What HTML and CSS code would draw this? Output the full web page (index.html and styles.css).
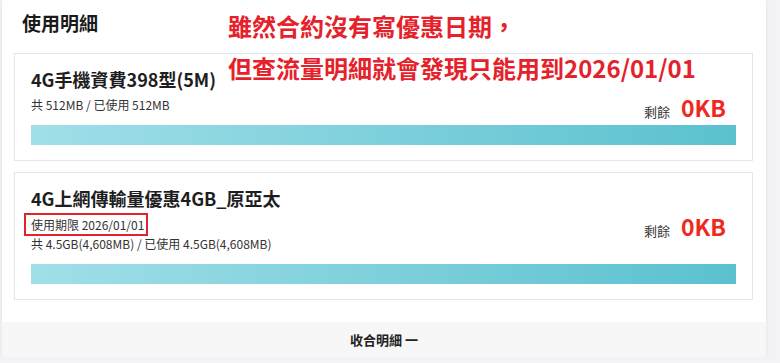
FILE: index.html
```html
<!DOCTYPE html>
<html>
<head>
    <meta charset="utf-8">
    <title>使用明細</title>
    <link rel="stylesheet" href="styles.css">
</head>
<body>
    <div class="panel">
        <h2 class="panel-title">使用明細</h2>
        <div class="usage-list">
            <div class="usage-card">
                <div class="usage-head">
                    <div class="usage-info">
                        <h3>4G手機資費398型(5M)</h3>
                        <p class="usage-total">共 512MB / 已使用 512MB</p>
                    </div>
                    <div class="usage-left">
                        <span class="left-label">剩餘</span>
                        <span class="left-value">0KB</span>
                    </div>
                </div>
                <div class="usage-bar"></div>
            </div>
            <div class="usage-card">
                <div class="usage-head">
                    <div class="usage-info">
                        <h3>4G上網傳輸量優惠4GB_原亞太</h3>
                        <p class="usage-expire"><span class="marked">使用期限 2026/01/01</span></p>
                        <p class="usage-total tight">共 4.5GB(4,608MB) / 已使用 4.5GB(4,608MB)</p>
                    </div>
                    <div class="usage-left">
                        <span class="left-label">剩餘</span>
                        <span class="left-value">0KB</span>
                    </div>
                </div>
                <div class="usage-bar"></div>
            </div>
        </div>
        <div class="panel-foot">收合明細 一</div>
    </div>

    <div class="note">
        <p>雖然合約沒有寫優惠日期，</p>
        <p>但查流量明細就會發現只能用到2026/01/01</p>
    </div>
</body>
</html>
```

FILE: styles.css
```css
body {
    font-family: "Noto Sans CJK TC", "Noto Sans", sans-serif;
    background-color: #f3f3f5;
    margin: 0;
    padding: 0 14px 0 2px;
    color: #222;
}
.panel {
    background-color: #fff;
    box-shadow: 0 0 4px rgba(0, 0, 0, 0.08);
    height: 357px;
    display: flex;
    flex-direction: column;
}
.panel-title {
    margin: 0;
    padding: 10px 0 0 20px;
    font-size: 19px;
    line-height: 26px;
    font-weight: bold;
    color: #1a1a1a;
}
.usage-list {
    padding: 17px 13px 0 12px;
    flex: 1;
}
.usage-card {
    border: 1px solid #e1e7ee;
    padding: 13px 16px 15px 16px;
    margin-bottom: 11px;
}
.usage-head {
    display: flex;
    justify-content: space-between;
    align-items: flex-start;
}
.usage-info h3 {
    margin: 0;
    font-size: 18px;
    line-height: 24px;
    font-weight: bold;
    color: #1e1e1e;
}
.usage-info p {
    margin: 0;
    font-size: 12px;
    line-height: 18px;
    color: #333;
}
.usage-total {
    padding-top: 5px;
}
.usage-total.tight {
    padding-top: 0;
}
.usage-expire {
    padding-top: 5px;
}
.usage-info .usage-expire {
    line-height: 20px;
}
.marked {
    outline: 2px solid #e5222b;
    outline-offset: 1px;
    padding: 0 1px 0 4px;
    margin-left: -4px;
}
.usage-left {
    display: flex;
    align-items: baseline;
    gap: 11px;
    margin: 26px 10px -7px 0;
}
.left-label {
    font-size: 13px;
    color: #333;
}
.left-value {
    font-size: 23px;
    line-height: 28px;
    font-weight: bold;
    color: #f0281e;
}
.usage-bar {
    margin-top: 11px;
    height: 20px;
    background: linear-gradient(to right, #a0dfe8, #5bc1cf);
}
.panel-foot {
    background-color: #f7f7f7;
    height: 35px;
    line-height: 35px;
    text-align: center;
    font-size: 13px;
    font-weight: bold;
    color: #222;
}
.note {
    position: absolute;
    left: 228px;
    top: 5px;
    color: #e5222b;
    font-size: 24px;
    font-weight: bold;
}
.note p {
    margin: 0;
    line-height: 42px;
}
```
